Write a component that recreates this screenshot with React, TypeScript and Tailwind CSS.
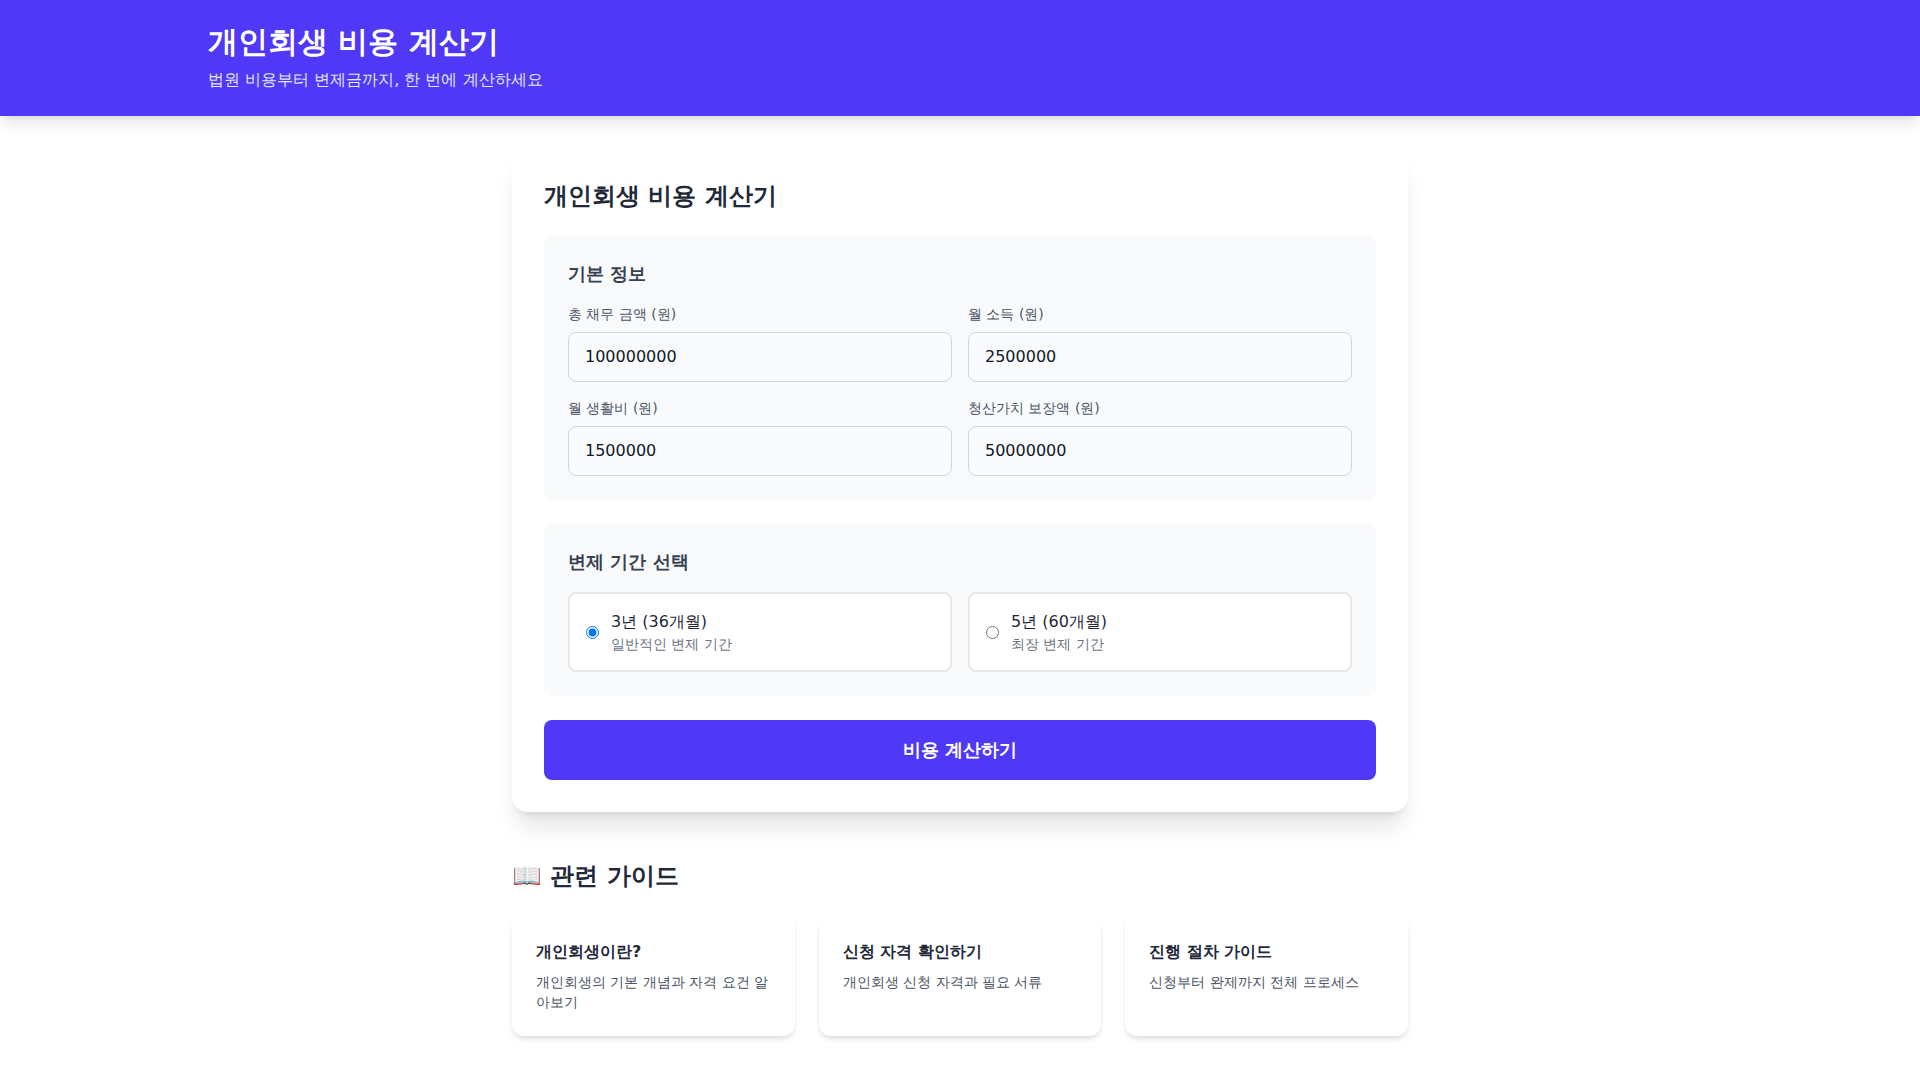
import { useState } from 'react';

const font = "font-['DejaVu_Sans',sans-serif]";

const fields = [
  { label: '총 채무 금액 (원)', value: '100000000' },
  { label: '월 소득 (원)', value: '2500000' },
  { label: '월 생활비 (원)', value: '1500000' },
  { label: '청산가치 보장액 (원)', value: '50000000' },
];

const periods = [
  { id: '36', title: '3년 (36개월)', desc: '일반적인 변제 기간' },
  { id: '60', title: '5년 (60개월)', desc: '최장 변제 기간' },
];

const guides = [
  { title: '개인회생이란?', desc: '개인회생의 기본 개념과 자격 요건 알아보기' },
  { title: '신청 자격 확인하기', desc: '개인회생 신청 자격과 필요 서류' },
  { title: '진행 절차 가이드', desc: '신청부터 완제까지 전체 프로세스' },
];

export default function App() {
  const [period, setPeriod] = useState('36');

  return (
    <div className={`min-h-screen bg-white ${font}`}>
      <header className="bg-indigo-600 text-white shadow-lg">
        <div className="mx-auto max-w-[1536px] px-4 py-6">
          <h1 className="mb-2 text-3xl font-bold">개인회생 비용 계산기</h1>
          <p className="text-base text-indigo-100">법원 비용부터 변제금까지, 한 번에 계산하세요</p>
        </div>
      </header>

      <main className="mx-auto max-w-[896px] pt-8">
        <div className="rounded-2xl bg-white p-8 shadow-xl">
          <h2 className="mb-6 text-2xl font-bold text-gray-800">개인회생 비용 계산기</h2>

          <section className="mb-6 rounded-lg bg-gray-50 p-6">
            <h3 className="mb-4 text-lg font-semibold text-gray-700">기본 정보</h3>
            <div className="grid grid-cols-2 gap-4">
              {fields.map((f) => (
                <label key={f.label} className="block">
                  <span className="mb-2 block text-sm text-gray-600">{f.label}</span>
                  <input
                    type="number"
                    defaultValue={f.value}
                    className="w-full rounded-lg border border-gray-300 bg-transparent px-4 py-3 text-base text-gray-900 [appearance:textfield]"
                  />
                </label>
              ))}
            </div>
          </section>

          <section className="mb-6 rounded-lg bg-gray-50 p-6">
            <h3 className="mb-4 text-lg font-semibold text-gray-700">변제 기간 선택</h3>
            <div className="grid grid-cols-2 gap-4">
              {periods.map((p) => (
                <label key={p.id} className="flex items-center gap-3 rounded-lg border-2 border-gray-200 bg-white p-4">
                  <input
                    type="radio"
                    name="period"
                    checked={period === p.id}
                    onChange={() => setPeriod(p.id)}
                    className="m-0 h-[13px] w-[13px]"
                  />
                  <span>
                    <span className="block text-base text-gray-800">{p.title}</span>
                    <span className="block text-sm text-gray-500">{p.desc}</span>
                  </span>
                </label>
              ))}
            </div>
          </section>

          <button className="w-full rounded-lg bg-indigo-600 py-4 text-lg font-semibold text-white">
            비용 계산하기
          </button>
        </div>

        <section className="mt-12">
          <h2 className="mb-6 text-2xl font-bold text-gray-800">📖 관련 가이드</h2>
          <div className="grid grid-cols-3 gap-6">
            {guides.map((g) => (
              <a key={g.title} href="#" className="block rounded-xl bg-white p-6 shadow-md">
                <h3 className="mb-2 text-base font-semibold text-gray-800">{g.title}</h3>
                <p className="text-sm text-gray-600">{g.desc}</p>
              </a>
            ))}
          </div>
        </section>
      </main>
    </div>
  );
}
